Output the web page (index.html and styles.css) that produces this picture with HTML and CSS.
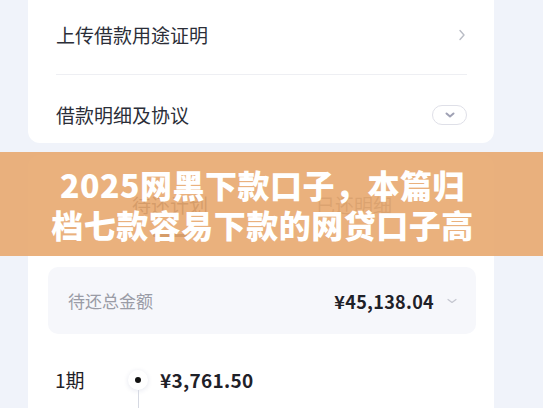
FILE: index.html
```html
<!DOCTYPE html>
<html lang="zh-CN">
<head>
    <meta charset="UTF-8">
    <meta name="viewport" content="width=device-width, initial-scale=1.0">
    <title>借款详情</title>
    <link rel="stylesheet" href="styles.css">
</head>
<body>

    <div class="page">
        <div class="card card-top">
            <div class="row row-first">
                <span class="row-title">上传借款用途证明</span>
                <svg class="arrow-right" width="8" height="12" viewBox="0 0 8 12">
                    <path d="M2 1.5 L6 6 L2 10.5" fill="none" stroke="#b9bcc5" stroke-width="1.4" stroke-linecap="round" stroke-linejoin="round"/>
                </svg>
            </div>
            <div class="row row-second">
                <span class="row-title">借款明细及协议</span>
                <span class="pill">
                    <svg width="12" height="8" viewBox="0 0 12 8">
                        <path d="M2.5 2.5 L6 5.5 L9.5 2.5" fill="none" stroke="#9fa1b4" stroke-width="2" stroke-linecap="round" stroke-linejoin="round"/>
                    </svg>
                </span>
            </div>
        </div>

        <div class="card card-plan">
            <div class="tabs">
                <div class="tab active">
                    <span>待还计划</span>
                    <i class="tab-line"></i>
                </div>
                <div class="tab">
                    <span>已还明细</span>
                </div>
            </div>

            <div class="total">
                <span class="total-label">待还总金额</span>
                <span class="total-right">
                    <span class="total-amount">¥45,138.04</span>
                    <svg width="12" height="8" viewBox="0 0 12 8">
                        <path d="M2 2.5 L6 5.5 L10 2.5" fill="none" stroke="#c4c6cf" stroke-width="1.2" stroke-linecap="round" stroke-linejoin="round"/>
                    </svg>
                </span>
            </div>

            <div class="period">
                <div class="period-left">
                    <div class="period-name">1期</div>
                    <div class="period-date">2025/03/20</div>
                </div>
                <div class="period-axis">
                    <span class="dot"><i></i></span>
                    <span class="axis-line"></span>
                </div>
                <div class="period-right">
                    <div class="period-amount">¥3,761.50</div>
                    <div class="period-detail"><span>本金 ¥3,301.25</span><span>利息 ¥460.25</span></div>
                </div>
            </div>
        </div>
    </div>

    <div class="banner">
        <h1 class="banner-title">2025网黑下款口子，本篇归档七款容易下款的网贷口子高通过率</h1>
    </div>

</body>
</html>
```

FILE: styles.css
```css
body {
    margin: 0;
    padding: 0;
    background: #f0f3fa;
    font-family: "Noto Sans CJK SC", "Noto Sans", sans-serif;
    color: #2b2e38;
    overflow: hidden;
    height: 408px;
}

.page {
    padding: 0 49px 0 28px;
}

.card {
    background: #fff;
}

.card-top {
    border-radius: 0 0 12px 12px;
    padding: 0 27px 0 28px;
}

.row {
    display: flex;
    align-items: center;
    justify-content: space-between;
}

.row-first {
    padding: 22px 0 26px;
    border-bottom: 1px solid #eeeff3;
}

.row-second {
    padding: 27px 0 15px;
}

.row-title {
    font-size: 19px;
    line-height: 26px;
}

.arrow-right {
    margin-right: 1px;
}

.pill {
    width: 33px;
    height: 18px;
    border: 1px solid #dfe0e8;
    border-radius: 10px;
    display: flex;
    align-items: center;
    justify-content: center;
}

.card-plan {
    margin-top: 12px;
    border-radius: 12px 12px 0 0;
    padding: 0 18px 0 20px;
    height: 300px;
}

/* tabs are mostly hidden under the banner */
.tabs {
    display: flex;
    justify-content: center;
    gap: 108px;
    height: 100px;
}

.tab {
    padding-top: 37px;
    display: flex;
    flex-direction: column;
    align-items: center;
    font-size: 19px;
    line-height: 26px;
    color: #6b6e78;
}

.tab.active {
    color: #2b2e38;
}

.tab-line {
    display: block;
    width: 34px;
    height: 3px;
    border-radius: 2px;
    background: #2b2e38;
    margin-top: 16px;
}

.total {
    margin-top: 12px;
    height: 67px;
    background: #f6f7fb;
    border-radius: 10px;
    padding: 0 18px 0 20px;
    display: flex;
    align-items: center;
    justify-content: space-between;
}

.total-label {
    font-size: 17px;
    color: #9a9ca6;
}

.total-right {
    display: flex;
    align-items: center;
    gap: 12px;
}

.total-amount {
    font-size: 18px;
    font-weight: 600;
    color: #1f2128;
    letter-spacing: 0.3px;
}

.period {
    display: flex;
    margin-top: 33px;
}

.period-left {
    width: 72px;
    padding-left: 7px;
}

.period-name {
    font-size: 19px;
    line-height: 26px;
    color: #1f2128;
}

.period-date,
.period-detail {
    margin-top: 14px;
    font-size: 14px;
    color: #a3a5ae;
}

.period-axis {
    width: 22px;
    display: flex;
    flex-direction: column;
    align-items: center;
}

.dot {
    width: 20px;
    height: 20px;
    margin-top: 3px;
    border-radius: 50%;
    background: #fff;
    box-shadow: 0 1px 5px rgba(40, 60, 120, 0.12);
    display: flex;
    align-items: center;
    justify-content: center;
}

.dot i {
    width: 6px;
    height: 6px;
    border-radius: 50%;
    background: #111;
}

.axis-line {
    width: 1px;
    height: 40px;
    background: #d6d9e2;
}

.period-right {
    padding-left: 11px;
}

.period-amount {
    font-size: 19px;
    line-height: 26px;
    font-weight: 600;
    color: #1f2128;
    letter-spacing: 0.3px;
}

.period-detail {
    display: flex;
    gap: 60px;
}

.banner {
    position: absolute;
    top: 152px;
    left: 0;
    right: 0;
    height: 104px;
    padding-right: 18px;
    background: rgba(232, 168, 111, 0.9);
    display: flex;
    justify-content: center;
    align-items: center;
}

.banner-title {
    margin: 0;
    width: 430px;
    max-height: 80px;
    overflow: hidden;
    color: #fff;
    font-size: 32px;
    line-height: 40px;
    font-weight: 900;
    letter-spacing: 0.5px;
    text-align: center;
    word-break: break-all;
}
```
